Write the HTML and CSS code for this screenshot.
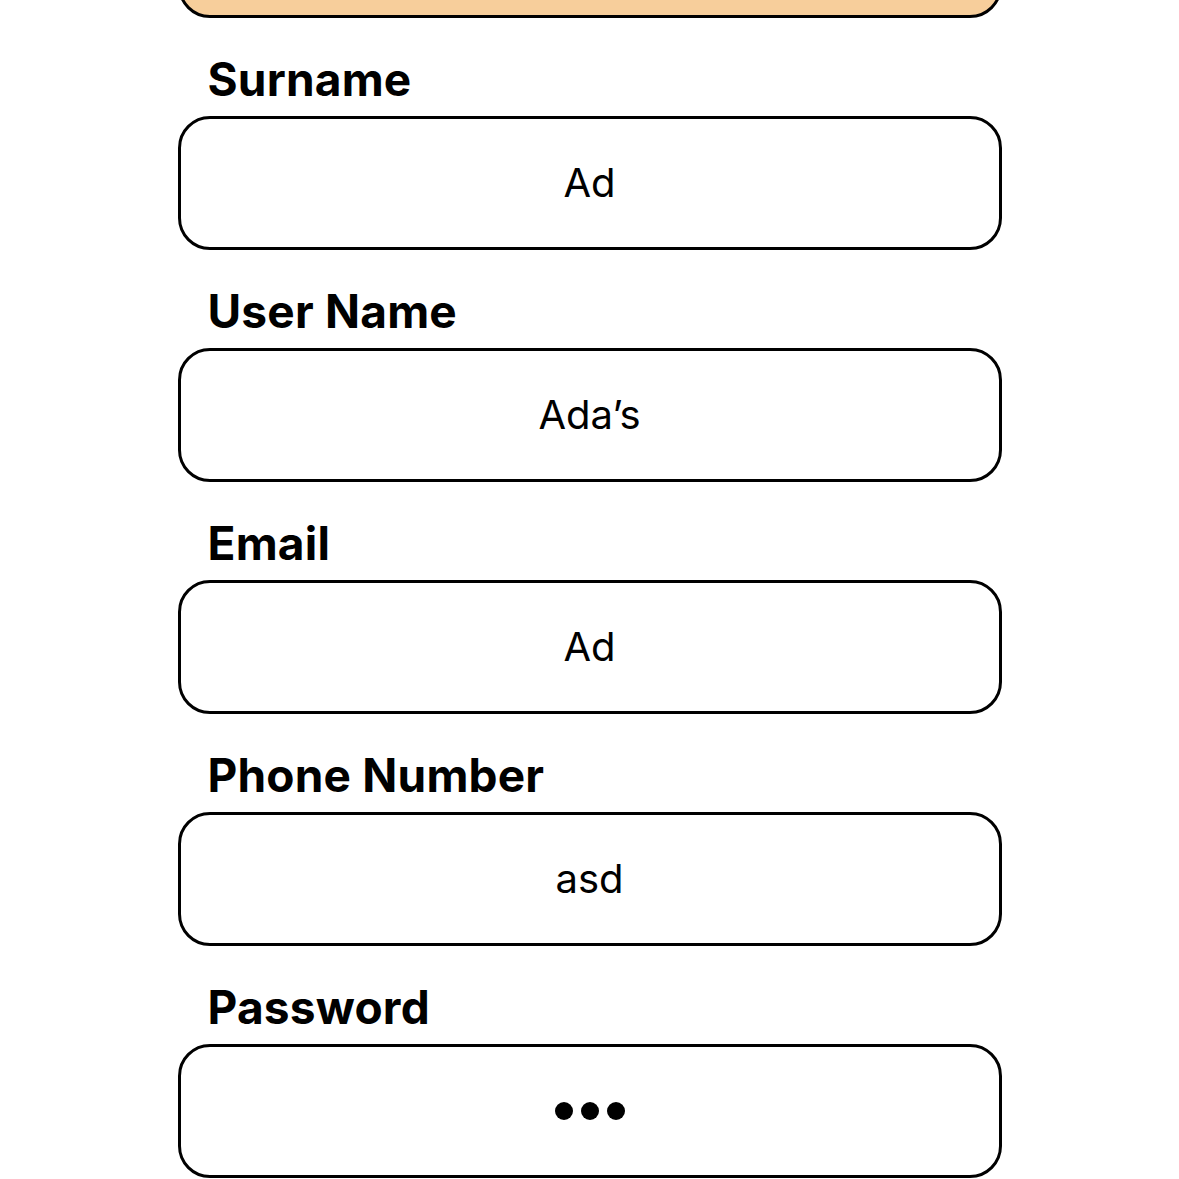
FILE: index.html
```html
<!DOCTYPE html>
<html>
<head>
<meta charset="utf-8">
<link rel="stylesheet" href="styles.css">
</head>
<body>
<div class="form">
  <div class="box top-box"></div>
  <div class="field">
    <div class="label">Surname</div>
    <div class="box"><span class="value">Ad</span></div>
  </div>
  <div class="field">
    <div class="label">User Name</div>
    <div class="box"><span class="value">Ada’s</span></div>
  </div>
  <div class="field">
    <div class="label">Email</div>
    <div class="box"><span class="value">Ad</span></div>
  </div>
  <div class="field">
    <div class="label">Phone Number</div>
    <div class="box"><span class="value">asd</span></div>
  </div>
  <div class="field">
    <div class="label">Password</div>
    <div class="box"><span class="dots"><i></i><i></i><i></i></span></div>
  </div>
</div>
</body>
</html>
```
FILE: styles.css
```css
html, body {
  margin: 0;
  padding: 0;
  background: #ffffff;
  overflow: hidden;
}
.form {
  width: 824px;
  margin: 0 auto;
  display: flex;
  flex-direction: column;
  font-family: Inter, "Noto Sans", sans-serif;
  color: #000;
}
.box {
  box-sizing: border-box;
  height: 134px;
  border: 3px solid #000;
  border-radius: 32px;
  background: #fff;
  display: flex;
  align-items: center;
  justify-content: center;
}
.top-box {
  margin-top: -116px;
  background: #f7ce9b;
}
.field {
  display: flex;
  flex-direction: column;
}
.label {
  height: 98px;
  box-sizing: border-box;
  padding: 34px 0 0 30px;
  font-size: 46px;
  font-weight: 700;
  line-height: 54px;
  letter-spacing: 0.2px;
}
.value {
  font-size: 40px;
  font-weight: 400;
  line-height: 1;
}
.dots {
  display: flex;
  gap: 8px;
}
.dots i {
  display: block;
  width: 18px;
  height: 18px;
  border-radius: 50%;
  background: #000;
}
```
